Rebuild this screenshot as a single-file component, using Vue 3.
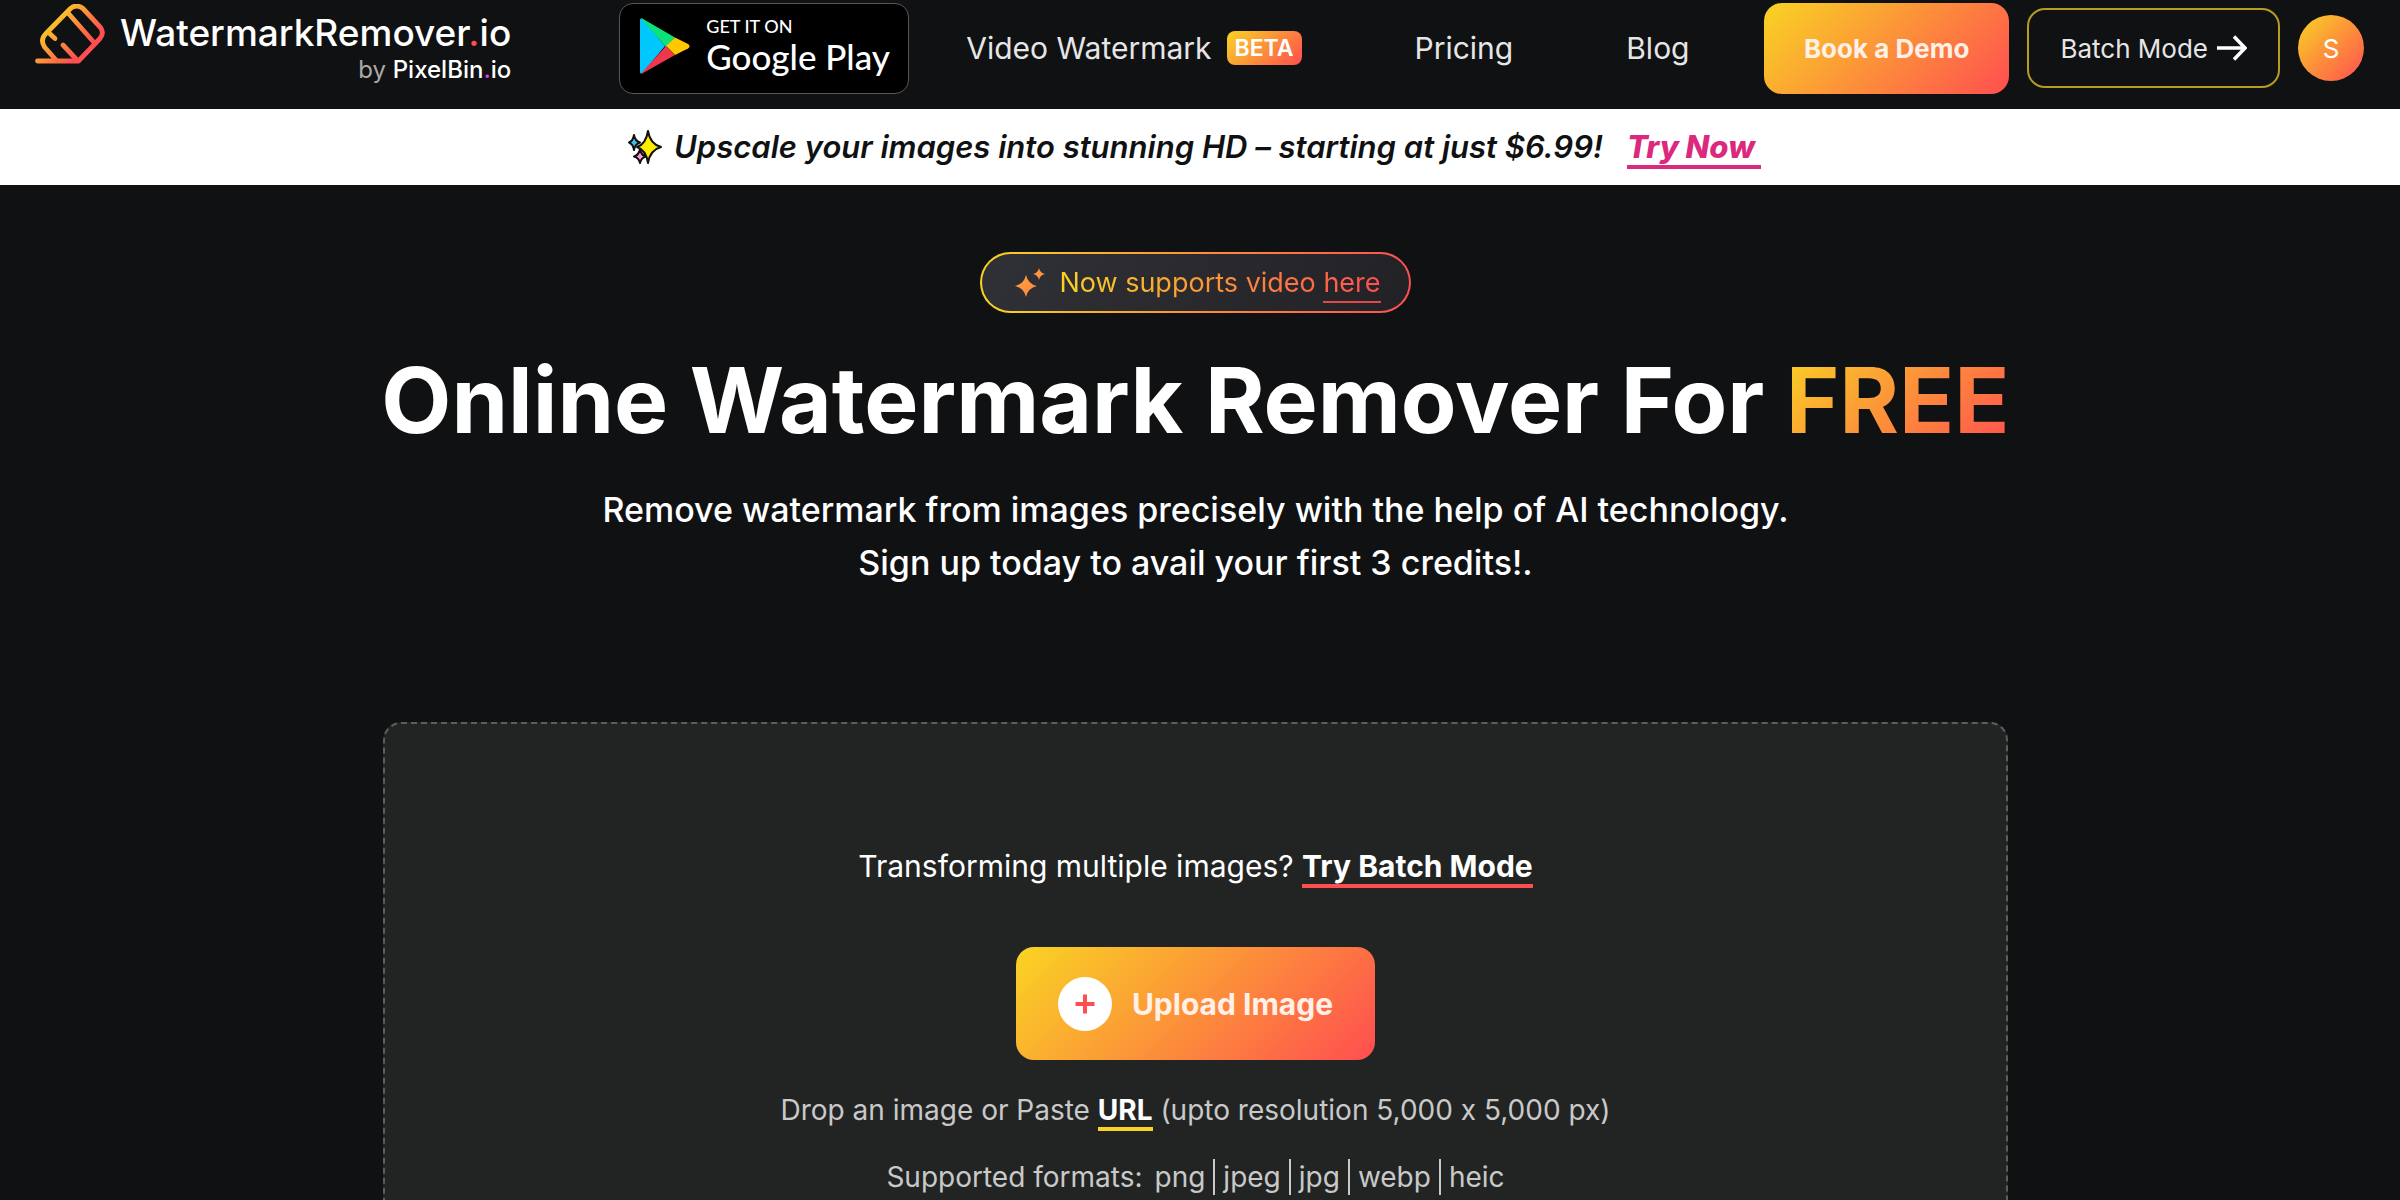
<script setup>
import { ref } from 'vue';

// Links in the top bar
const navLinks = [
  { label: "Video Watermark", badge: "BETA" },
  { label: "Pricing" },
  { label: "Blog" }
];

// Accepted file types
const formats = ["png", "jpeg", "jpg", "webp", "heic"];

const fileInput = ref(null);

function openPicker() {
  fileInput.value.click();
}
</script>

<template>
  <div class="page">
    <header class="header">
      <a href="#" class="logo">
        <svg class="logo-icon" viewBox="0 0 70 60" fill="none">
          <defs>
            <linearGradient id="logoGradient" x1="15" y1="12" x2="50" y2="44" gradientUnits="userSpaceOnUse">
              <stop stop-color="#f9d423" />
              <stop offset="1" stop-color="#ff4e50" />
            </linearGradient>
          </defs>
          <g stroke="url(#logoGradient)" stroke-width="4.8" stroke-linecap="round" stroke-linejoin="round">
            <path d="M2.500 57H43.500L65 34.500Q69.500 29 65.500 23.500L48 4.500Q41.500 -.5 35.500 4.500L10.500 30Q5 36 9.500 43L21 56" />
            <path d="M33.500 9.500L59 38.500" />
            <path d="M13.500 28.500L20 34.500" />
            <path d="M28 41L42 56" />
          </g>
        </svg>
        <span class="logo-text">
          <span class="logo-name">WatermarkRemover<span class="dot-red">.</span>io</span>
          <span class="logo-by">by <b>PixelBin<span class="dot-purple">.</span>io</b></span>
        </span>
      </a>

      <a href="#" class="play-badge">
        <svg class="play-icon" viewBox="0 0 50 56">
          <path d="M0 2Q0 0 2 .5L25 28L2 55.500Q0 56 0 54Z" fill="#00c8ff" />
          <path d="M1 .5Q2 0 4 1.500L35 19.500L26 29Z" fill="#0be37a" />
          <path d="M35 19.500L48 26Q51 28 48 30.500L35 37L26 28Z" fill="#ffc800" />
          <path d="M1 55.500Q2 56 4 54.500L35 37L26 28Z" fill="#f0364c" />
        </svg>
        <span class="play-text">
          <span class="play-small">GET IT ON</span>
          <span class="play-big">Google Play</span>
        </span>
      </a>

      <nav class="nav">
        <a v-for="link in navLinks" :key="link.label" href="#" class="nav-link">
          {{ link.label }}
          <span v-if="link.badge" class="beta">{{ link.badge }}</span>
        </a>
      </nav>

      <div class="actions">
        <button class="demo-btn">Book a Demo</button>
        <button class="batch-btn">
          Batch Mode
          <svg class="arrow" viewBox="0 0 30 26" fill="none" stroke="#fff" stroke-width="3.500">
            <path d="M0 13H28M17 1.500L28 13L17 24.500" />
          </svg>
        </button>
        <button class="avatar">S</button>
      </div>
    </header>

    <div class="banner">
      <svg class="sparkles" viewBox="0 0 34 34" stroke="#111" stroke-width="2" stroke-linejoin="round">
        <path d="M6 5Q7 11 12 12.500Q7 14 6 20Q5 14 1 12.500Q5 11 6 5Z" fill="#35c3ee" />
        <path d="M12 19Q13 25 18 26.500Q13 28 12 33Q11 28 6 26.500Q11 25 12 19Z" fill="#ff9ad5" />
        <path d="M20 1Q22 14 33 17Q22 20 20 33Q18 20 9 17Q18 14 20 1Z" fill="#ffec00" />
      </svg>
      <span class="banner-text">Upscale your images into stunning HD – starting at just $6.99!</span>
      <a href="#" class="try-now">Try Now</a>
    </div>

    <main class="hero">
      <div class="pill">
        <svg class="pill-icon" viewBox="0 0 30 30">
          <defs>
            <linearGradient id="starGradient" x1="0" y1="0" x2="1" y2="1">
              <stop stop-color="#fcac35" />
              <stop offset="1" stop-color="#ff7d45" />
            </linearGradient>
          </defs>
          <path d="M11 7Q13 16 22 18Q13 20 11 29Q9 20 0 18Q9 16 11 7Z" fill="url(#starGradient)" />
          <path d="M24 0Q25 5 30 6Q25 7 24 12Q23 7 18 6Q23 5 24 0Z" fill="#ff9440" />
        </svg>
        <span class="pill-text">Now supports video <a href="#" class="pill-link">here</a></span>
      </div>

      <h1>Online Watermark Remover For <span class="free">FREE</span></h1>
      <p class="subtitle">
        Remove watermark from images precisely with the help of AI technology.<br />
        Sign up today to avail your first 3 credits!.
      </p>

      <section class="upload-card">
        <p class="batch-line">Transforming multiple images? <a href="#" class="batch-link">Try Batch Mode</a></p>

        <button class="upload-btn" @click="openPicker">
          <svg class="plus" viewBox="0 0 54 54">
            <circle cx="27" cy="27" r="27" fill="#fff" />
            <path d="M27 17.500V36.500M17.500 27H36.500" stroke="#ff4e50" stroke-width="4" />
          </svg>
          Upload Image
        </button>
        <input ref="fileInput" type="file" accept="image/*" aria-label="Upload Image" hidden />

        <p class="drop-line">Drop an image or Paste <a href="#" class="url-link">URL</a> (upto resolution 5,000 x 5,000 px)</p>
        <div class="formats">
          <span class="formats-label">Supported formats:</span>
          <span v-for="format in formats" :key="format" class="format">{{ format }}</span>
        </div>
      </section>
    </main>
  </div>
</template>

<style>
body {
  background-color: #101113;
}
</style>

<style scoped>
.page {
  height: 100vh;
  overflow: hidden;
  background-color: #101113;
  color: #fff;
  font-family: Inter, "Liberation Sans", sans-serif;
  font-optical-sizing: none;
  font-variant-ligatures: no-contextual; /* keeps the x between numbers a letter */
}

a {
  color: inherit;
  text-decoration: none;
}

button {
  font-family: inherit;
  border: none;
  cursor: pointer;
}

.header {
  height: 109px;
  padding: 0 36px 13px 35px;
  box-sizing: border-box;
  display: flex;
  align-items: center;
}

.logo {
  display: flex;
  gap: 15px;
  align-items: flex-start;
  margin-bottom: 8px;
}

.logo-icon {
  width: 70px;
  height: 60px;
}

.logo-text {
  display: flex;
  flex-direction: column;
  align-items: flex-end;
  padding-top: 6px;
}

.logo-name {
  font-size: 37px;
  font-weight: 500;
  line-height: 46px;
}

.logo-by {
  font-size: 24px;
  line-height: 28px;
  color: #aaa;
}

.logo-by b {
  font-weight: 500;
  color: #fff;
}

.dot-red {
  color: #ff4e50;
}

.dot-purple {
  color: #d63bf0;
}

.play-badge {
  display: flex;
  align-items: center;
  gap: 16px;
  width: 290px;
  height: 91px;
  margin-left: 108px;
  padding: 0 0 4px 20px;
  box-sizing: border-box;
  background-color: #000;
  border: 1px solid #55575a;
  border-radius: 14px;
}

.play-icon {
  width: 50px;
  height: 56px;
}

.play-text {
  display: flex;
  flex-direction: column;
  font-family: Lato, sans-serif;
  font-weight: 500;
  white-space: nowrap;
}

.play-small {
  font-size: 18px;
  line-height: 20px;
}

.play-big {
  font-size: 35px;
  line-height: 40px;
}

.nav {
  display: flex;
  gap: 113px;
  margin-left: 57px;
}

.nav-link {
  display: flex;
  align-items: center;
  gap: 15px;
  font-size: 30px;
  line-height: 36px;
  color: #e6e6e6;
  white-space: nowrap;
}

.beta {
  padding: 0 8px;
  border-radius: 8px;
  background: linear-gradient(135deg, #f9d423, #ff4e50);
  color: #fff;
  font-size: 23px;
  font-weight: 600;
  line-height: 34px;
}

.actions {
  display: flex;
  align-items: center;
  gap: 18px;
  margin-left: auto;
}

.demo-btn {
  height: 91px;
  padding: 0 40px;
  border-radius: 18px;
  background: linear-gradient(135deg, #f9d423, #ff4e50);
  color: #fff0e8;
  font-size: 26px;
  font-weight: 700;
}

.batch-btn {
  display: flex;
  align-items: center;
  gap: 9px;
  height: 80px;
  padding: 0 31px;
  border: 2px solid #b59d22;
  border-radius: 18px;
  background: none;
  color: #e6e6e6;
  font-size: 26px;
}

.arrow {
  width: 30px;
  height: 26px;
}

.avatar {
  width: 66px;
  height: 66px;
  padding: 0;
  border-radius: 50%;
  background: linear-gradient(135deg, #f9d423, #ff4e50);
  color: #fff;
  font-size: 26px;
}

.banner {
  display: flex;
  align-items: center;
  justify-content: center;
  height: 76px;
  padding-right: 11px;
  background-color: #fff;
  color: #101113;
  font-size: 31px;
  font-style: italic;
  font-weight: 600;
  line-height: 36px;
}

.sparkles {
  width: 34px;
  height: 34px;
  margin-right: 12px;
}

.try-now {
  margin-left: 24px;
  padding-right: 6px;
  border-top: 4px solid transparent;
  border-bottom: 4px solid #db2a7e;
  color: #db2a7e;
  font-weight: 800;
}

.hero {
  display: flex;
  flex-direction: column;
  align-items: center;
  padding: 67px 9px 0 0;
}

.pill {
  display: flex;
  align-items: center;
  gap: 14px;
  height: 61px;
  padding: 0 28px 0 33px;
  box-sizing: border-box;
  border: 2px solid transparent;
  border-radius: 31px;
  background:
    linear-gradient(120deg, #303136, #222126) padding-box,
    linear-gradient(90deg, #f9d423, #ff4e50) border-box;
}

.pill-icon {
  width: 30px;
  height: 30px;
}

.pill-text {
  background: linear-gradient(90deg, #f9d423, #ff4e50);
  background-clip: text;
  color: transparent;
  font-size: 27px;
  line-height: 38px;
}

.pill-link {
  padding-bottom: 2px;
  border-bottom: 2px solid #e0484c;
}

h1 {
  margin: 32px 0 0;
  font-size: 91px;
  font-weight: 700;
  line-height: 110px;
}

.free {
  background: linear-gradient(135deg, #f9d423, #ff4e50);
  background-clip: text;
  color: transparent;
}

.subtitle {
  margin: 28px 0 0;
  font-size: 34px;
  font-weight: 500;
  line-height: 53px;
  text-align: center;
}

.upload-card {
  display: flex;
  flex-direction: column;
  align-items: center;
  width: 68%;
  margin-top: 133px;
  padding: 124px 0 80px;
  box-sizing: border-box;
  border: 2px dashed #5c5e5d;
  border-radius: 18px;
  background-color: #222423;
}

.batch-line {
  margin: 0;
  font-size: 30px;
  line-height: 36px;
}

.batch-link {
  border-bottom: 4px solid #ff4e50;
  font-weight: 700;
}

.upload-btn {
  display: flex;
  align-items: center;
  gap: 20px;
  height: 113px;
  margin-top: 63px;
  padding: 0 42px;
  border-radius: 18px;
  background: linear-gradient(135deg, #f9d423, #ff4e50);
  color: #fff0e8;
  font-size: 30px;
  font-weight: 700;
}

.plus {
  width: 54px;
  height: 54px;
}

.drop-line {
  margin: 32px 0 0;
  color: #c9c9c9;
  font-size: 28px;
  line-height: 36px;
}

.url-link {
  border-bottom: 4px solid #f9d423;
  color: #fff;
  font-weight: 700;
}

.formats {
  display: flex;
  margin-top: 31px;
  color: #c9c9c9;
  font-size: 28px;
  line-height: 36px;
}

.formats-label {
  margin-right: 4px;
}

.format {
  padding: 0 8px;
}

.format + .format {
  border-left: 2px solid #c9c9c9;
}

.format:last-child {
  padding-right: 0;
}
</style>
